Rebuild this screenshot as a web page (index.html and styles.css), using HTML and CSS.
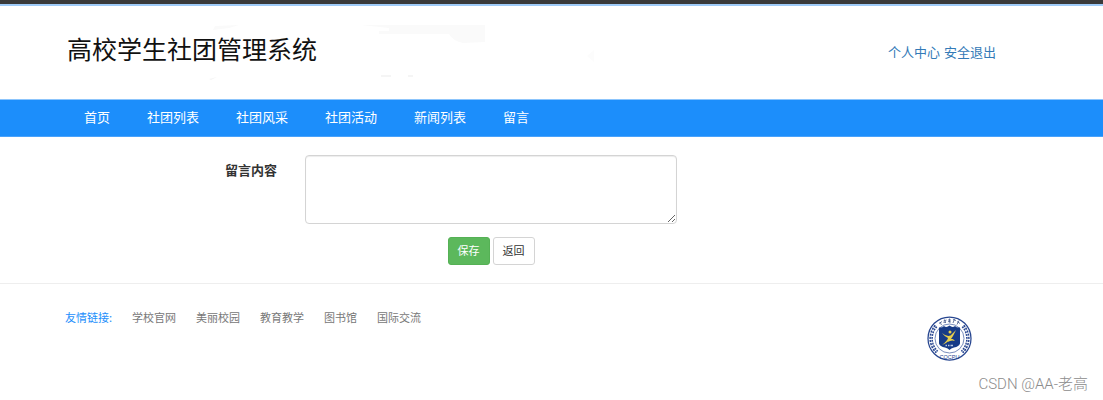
FILE: index.html
```html
<!DOCTYPE html>
<html lang="zh-CN">
<head>
    <meta charset="UTF-8">
    <meta name="viewport" content="width=device-width, initial-scale=1.0">
    <title>高校学生社团管理系统</title>
    <link rel="stylesheet" href="styles.css">
</head>
<body>

    <header class="header">
        <div class="banner">
            <svg class="banner-bg" width="530" height="56" viewBox="0 0 530 56" aria-hidden="true">
                <path d="M150 1L174 0L164 3L148 5Z M244 0H420V17L398 18Q388 16 384 9H314V6H324V3L296 0Z" fill="#fafafa"/>
                <path d="M144 54L152 52L146 55Z M316 50H326V52H316Z M343 50H348V52H343Z" fill="#f5f5f5"/>
                <path d="M522 31L529 25V37Z" fill="#fcfcfc"/>
            </svg>
            <h1 class="site-name">高校学生社团管理系统</h1>
        </div>
        <div class="user-links">
            <a href="#">个人中心</a>
            <a href="#">安全退出</a>
        </div>
    </header>

    <nav class="nav">
        <a href="#">首页</a>
        <a href="#">社团列表</a>
        <a href="#">社团风采</a>
        <a href="#">社团活动</a>
        <a href="#">新闻列表</a>
        <a href="#">留言</a>
    </nav>

    <form class="message-form">
        <label for="content">留言内容</label>
        <textarea id="content" name="content"></textarea>
        <div class="buttons">
            <button type="submit" class="btn btn-save">保存</button>
            <button type="button" class="btn">返回</button>
        </div>
    </form>

    <footer class="footer">
        <div class="links">
            <span class="links-title">友情链接:</span>
            <a href="#">学校官网</a>
            <a href="#">美丽校园</a>
            <a href="#">教育教学</a>
            <a href="#">图书馆</a>
            <a href="#">国际交流</a>
        </div>
        <!-- 校徽 -->
        <svg class="crest" viewBox="0 0 90 90" role="img" aria-label="校徽">
            <circle cx="45" cy="45" r="43" fill="#fff" stroke="#274690" stroke-width="2.5"/>
            <circle cx="45" cy="45" r="29" fill="none" stroke="#4a66a5" stroke-width="1.5"/>
            <path d="M18 20A37 37 0 0 0 20 72M72 20A37 37 0 0 1 70 72" fill="none" stroke="#274690" stroke-width="7" stroke-dasharray="4 2"/>
            <path d="M18 20A37 37 0 0 0 20 72M72 20A37 37 0 0 1 70 72" fill="none" stroke="#fff" stroke-width="1"/>
            <path d="M24 15l6-4M26 12l3 6M33 10l6-2M35 7l2 7M33 13l5-1M42 8h6M45 5v8M42 11l6 1M52 7l6 2M55 6l-3 8M60 11l6 4M64 9l-4 8" fill="none" stroke="#3c5287" stroke-width="1.5"/>
            <path d="M24 23Q30 24 34 20Q39 24 45 19Q51 24 56 20Q60 24 66 23V55Q64 61 54 63Q48 64 45 68Q42 64 36 63Q26 61 24 55Z" fill="#173b87"/>
            <path d="M30 34Q39 42 47 39L58 28L52 40Q49 46 38 54L30 58Q41 49 42 44Q35 41 30 34Z" fill="#e9cf4b"/>
            <circle cx="46" cy="32" r="3" fill="#e9cf4b"/>
            <path d="M44 45Q53 44 56 50Q49 47 41 52Z" fill="#e9cf4b"/>
            <path d="M37 59h3M42 59h3M47 59h5" stroke="#b9c6df" stroke-width="3"/>
            <text x="45" y="85" text-anchor="middle" class="crest-text">CQCPU</text>
        </svg>
    </footer>

    <div class="watermark">CSDN @AA-老高</div>

</body>
</html>
```
FILE: styles.css
```css
* {
    box-sizing: border-box;
}

body {
    margin: 0;
    border-top: 4px solid #3a3a3a;
    background-color: #fff;
    color: #333;
    font-family: "Noto Sans CJK SC", sans-serif;
    font-size: 13px;
    line-height: 20px;
}

a {
    color: #337ab7;
    text-decoration: none;
}

.header {
    display: flex;
    justify-content: space-between;
    align-items: flex-start;
    padding: 19px 107px 18px 65px;
    border-top: 2px solid #9fcbf8;
}

.banner {
    display: grid;
    align-items: center;
    height: 56px;
}

.banner-bg,
.site-name {
    grid-area: 1 / 1;
}

.site-name {
    margin: 0;
    padding: 0 2px 10px;
    color: #111;
    font-size: 25px;
    font-weight: normal;
    line-height: 36px;
}

.user-links {
    display: flex;
    gap: 4px;
    padding-top: 17px;
}

.nav {
    display: flex;
    flex-wrap: wrap;
    gap: 0 37px;
    padding: 7px 84px 9px;
    border-top: 1px solid #8cc5fc;
    border-bottom: 1px solid #49a2fb;
    background-color: #1c8efb;
}

.nav a {
    color: #fff;
}

.message-form {
    display: grid;
    grid-template-columns: 277fr 372fr 398fr;
    column-gap: 28px;
    row-gap: 13px;
    padding: 18px 0;
    border-bottom: 1px solid #eee;
}

.message-form label {
    padding-top: 5px;
    font-weight: bold;
    text-align: right;
}

.message-form textarea {
    display: block;
    width: 100%;
    height: 69px;
    padding: 6px 11px;
    border: 1px solid #d4d4d4;
    border-radius: 4px;
    box-shadow: inset 0 1px 1px rgba(0, 0, 0, 0.075);
    font: inherit;
}

.buttons {
    display: flex;
    grid-column: 2;
    justify-content: center;
    gap: 3px;
}

.btn {
    height: 28px;
    padding: 0 9px 2px;
    border: 1px solid #d4d4d4;
    border-radius: 3px;
    background-color: #fff;
    color: #333;
    font-family: inherit;
    font-size: 11px;
    line-height: 16px;
    cursor: pointer;
}

.btn-save {
    border-color: #55b155;
    background-color: #5cb85c;
    color: #fff;
}

.footer {
    display: flex;
    justify-content: space-between;
    padding: 23px 131px 24px 65px;
    font-size: 11px;
}

.links {
    display: flex;
    flex-wrap: wrap;
    gap: 0 20px;
}

.links a {
    color: #777;
}

.links-title {
    color: #1c8efb;
}

.crest {
    width: 45px;
    height: 45px;
    margin-top: 9px;
}

.crest-text {
    fill: #274690;
    font-family: "Liberation Sans", sans-serif;
    font-size: 11px;
}

.watermark {
    position: absolute;
    right: 15px;
    bottom: 6px;
    color: #8c8c8c;
    font-family: Roboto, "Noto Sans CJK SC", sans-serif;
    font-size: 15px;
    font-weight: 300;
}
```
